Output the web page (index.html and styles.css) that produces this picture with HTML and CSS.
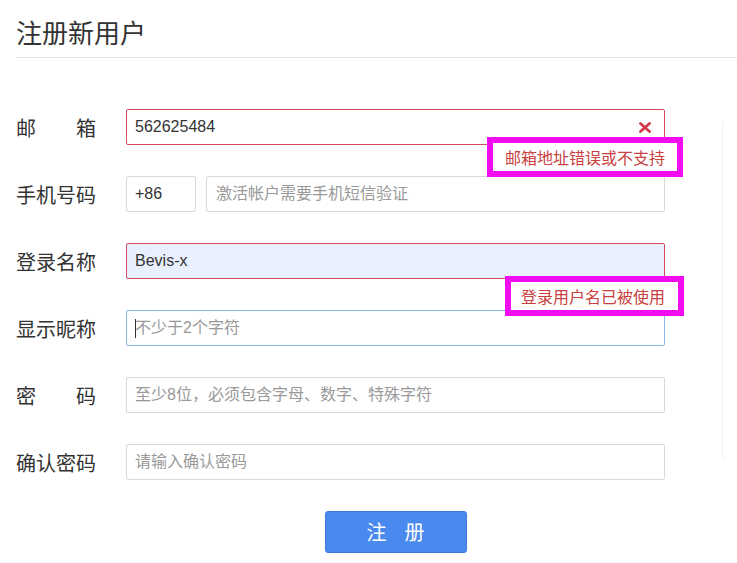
FILE: index.html
```html
<!DOCTYPE html>
<html lang="zh-CN">
<head>
<meta charset="utf-8">
<title>注册新用户</title>
<link rel="stylesheet" href="styles.css">
</head>
<body>
<div class="page">
  <h1 class="title">注册新用户</h1>
  <div class="main">
    <form class="form">
      <label class="label justify"><span>邮</span><span>箱</span></label>
      <div class="cell">
        <input class="input error" type="text" value="562625484">
        <svg class="clear-x" width="12" height="11" viewBox="0 0 12 11"><path d="M1.5 1.5 L10.5 9.5 M10.5 1.5 L1.5 9.5" stroke="#d2384a" stroke-width="2.8" stroke-linecap="round"/></svg>
        <div class="tip tip-email">邮箱地址错误或不支持</div>
      </div>

      <label class="label">手机号码</label>
      <div class="cell phone">
        <input class="input code" type="text" value="+86">
        <input class="input grow" type="text" placeholder="激活帐户需要手机短信验证">
      </div>

      <label class="label">登录名称</label>
      <div class="cell">
        <input class="input error autofill" type="text" value="Bevis-x">
        <div class="tip tip-login">登录用户名已被使用</div>
      </div>

      <label class="label">显示昵称</label>
      <div class="cell">
        <input class="input focus" type="text" placeholder="不少于2个字符">
        <span class="caret"></span>
      </div>

      <label class="label justify"><span>密</span><span>码</span></label>
      <div class="cell">
        <input class="input" type="password" placeholder="至少8位，必须包含字母、数字、特殊字符">
      </div>

      <label class="label">确认密码</label>
      <div class="cell">
        <input class="input" type="password" placeholder="请输入确认密码">
      </div>

      <div class="actions">
        <button class="btn" type="button"><span>注</span><span>册</span></button>
      </div>
    </form>
    <aside class="side"></aside>
  </div>
</div>
</body>
</html>
```

FILE: styles.css
```css
* { box-sizing: border-box; }
html, body { margin: 0; padding: 0; background: #fff; }
body {
  font-family: "Liberation Sans", "Noto Sans CJK SC", sans-serif;
  color: #333;
  overflow: hidden;
}
.page { padding-left: 16px; }
.title {
  margin: 0;
  padding: 16px 0 5px;
  font-size: 26px;
  line-height: 36px;
  font-weight: normal;
  color: #333;
  border-bottom: 1px solid #e5e5e5;
}
.main {
  display: flex;
  align-items: flex-start;
  margin-top: 51px;
}
.form {
  display: grid;
  grid-template-columns: 110px 539px;
  row-gap: 31px;
  margin: 0;
}
.label {
  display: flex;
  align-items: center;
  height: 36px;
  font-size: 20px;
  color: #333;
}
.label.justify {
  justify-content: space-between;
  width: 80px;
}
.cell {
  position: relative;
  display: flex;
  height: 36px;
}
.input {
  width: 100%;
  height: 36px;
  margin: 0;
  padding: 0 8px;
  border: 1px solid #d9d9d9;
  border-radius: 2px;
  font-family: "Liberation Sans", "Noto Sans CJK SC", sans-serif;
  font-size: 16px;
  color: #333;
  background: #fff;
  outline: none;
}
.input::placeholder { color: #999; }
.input.error { border-color: #d04b5b; }
.input.autofill { background: #e8f0fe; }
.input.focus { border-color: #8ab6ee; }
.phone { gap: 10px; }
.input.code { width: 70px; flex: none; }
.input.grow { flex: 1; padding-left: 9px; }
.clear-x {
  position: absolute;
  right: 14px;
  top: 13px;
}
.caret {
  position: absolute;
  left: 9px;
  top: 9px;
  width: 1px;
  height: 19px;
  background: #333;
}
.tip {
  position: absolute;
  right: -18px;
  border: 6px solid #f20cf0;
  background: #fff;
  color: #c94040;
  font-family: "Noto Sans CJK SC", sans-serif;
  font-size: 16px;
  line-height: 28px;
  white-space: nowrap;
  z-index: 2;
}
.tip-email { top: 28px; padding: 0 12px; }
.tip-login { top: 33px; padding: 0 13px 0 10px; right: -19px; }
.actions {
  grid-column: 2;
  display: flex;
  justify-content: center;
}
.btn {
  display: flex;
  justify-content: center;
  align-items: center;
  gap: 18px;
  width: 142px;
  height: 42px;
  margin: 0;
  padding: 0;
  border: 1px solid #3d7ad9;
  border-radius: 3px;
  background: #4a89ee;
  color: #fff;
  font-family: "Noto Sans CJK SC", sans-serif;
  font-size: 20px;
  line-height: 1;
}
.side {
  margin-left: 57px;
  margin-top: 13px;
  width: 20px;
  height: 338px;
  border-left: 1px solid #f0f0f0;
  border-radius: 4px 0 0 4px;
}
```
